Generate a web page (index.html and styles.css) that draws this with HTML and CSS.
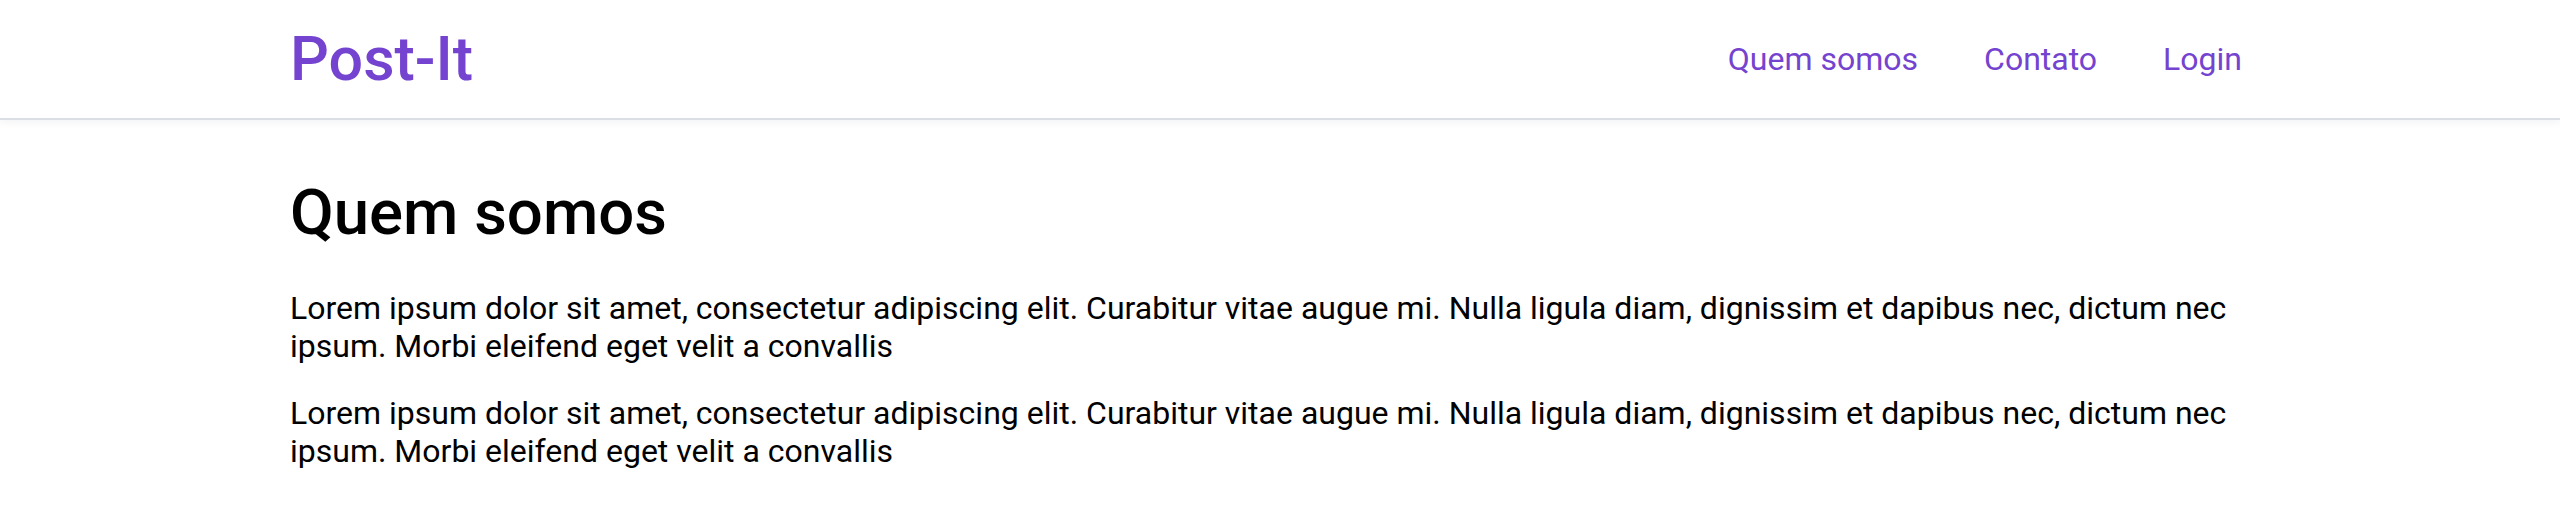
FILE: index.html
```html
<!DOCTYPE html>
<html lang="pt-BR">
<head>
<meta charset="utf-8">
<title>Post-It</title>
<link rel="stylesheet" href="styles.css">
</head>
<body>
<header class="site-header">
  <div class="container header-inner">
    <a class="logo" href="#">Post-It</a>
    <nav class="nav">
      <a class="nav-link" href="#">Quem somos</a>
      <a class="nav-link" href="#">Contato</a>
      <a class="nav-link" href="#">Login</a>
    </nav>
  </div>
</header>
<main class="container content">
  <h1 class="title">Quem somos</h1>
  <p class="text">Lorem ipsum dolor sit amet, consectetur adipiscing elit. Curabitur vitae augue mi. Nulla ligula diam, dignissim et dapibus nec, dictum nec ipsum. Morbi eleifend eget velit a convallis</p>
  <p class="text">Lorem ipsum dolor sit amet, consectetur adipiscing elit. Curabitur vitae augue mi. Nulla ligula diam, dignissim et dapibus nec, dictum nec ipsum. Morbi eleifend eget velit a convallis</p>
</main>
</body>
</html>
```
FILE: styles.css
```css
* { box-sizing: border-box; }
html, body {
  margin: 0;
  padding: 0;
  background: #ffffff;
  font-family: Roboto, "Liberation Sans", Arial, sans-serif;
  color: #000000;
}
.container {
  width: 1980px;
  margin: 0 auto;
}
.site-header {
  height: 120px;
  border-bottom: 2px solid #dcdee5;
  box-shadow: 0 2px 8px rgba(20, 30, 60, 0.06);
}
.header-inner {
  height: 118px;
  display: flex;
  align-items: center;
  justify-content: space-between;
}
.logo {
  font-size: 61px;
  font-weight: 500;
  color: #7443cf;
  text-decoration: none;
}
.nav {
  display: flex;
  gap: 66px;
  padding-right: 28px;
}
.nav-link {
  font-size: 32px;
  color: #7443cf;
  text-decoration: none;
}
.content {
  padding-top: 56px;
}
.title {
  font-size: 63.5px;
  font-weight: 500;
  margin: 0 0 40px;
  line-height: 74px;
}
.text {
  font-size: 32px;
  line-height: 37.5px;
  margin: 0 0 30px;
}
```
